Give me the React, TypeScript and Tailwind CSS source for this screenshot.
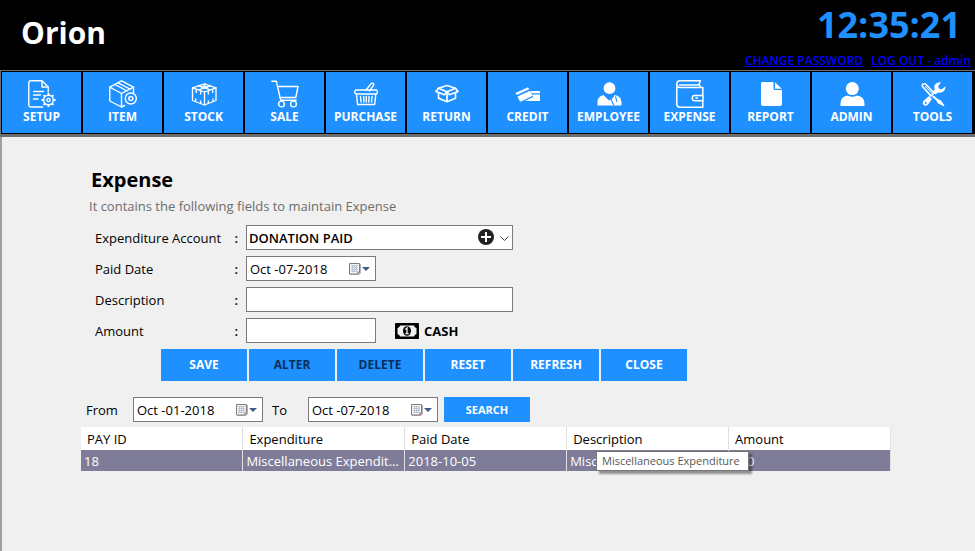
import type { ReactNode } from "react";

const line = {
  fill: "none",
  stroke: "currentColor",
  strokeWidth: 1.4,
  strokeLinejoin: "round" as const,
  strokeLinecap: "round" as const,
};

function Glyph({ children }: { children: ReactNode }) {
  return (
    <svg viewBox="0 0 28 28" className="size-7" aria-hidden="true">
      {children}
    </svg>
  );
}

const SetupIcon = (
  <Glyph>
    <g {...line}>
      <path d="M14.5 27H2.5A1.8 1.8 0 0 1 .8 25.300V2.500A1.800 1.800 0 0 1 2.500.8H14l6.200 6.200v5" />
      <path d="M14 1v6h6" />
      <path d="M5.500 11.500h10M5.500 15h7M5.500 19h4.500" />
      <circle cx="20.500" cy="20" r="4.800" />
      <circle cx="20.500" cy="20" r="1.600" />
    </g>
    <path
      d="M20.500 13v2M20.500 25v2M13.500 20h2M25.500 20h2M15.600 15.100l1.400 1.400M24 23.500l1.400 1.400M15.600 24.900l1.400-1.400M24 16.500l1.400-1.400"
      fill="none"
      stroke="currentColor"
      strokeWidth="2"
    />
  </Glyph>
);

const ItemIcon = (
  <Glyph>
    <g {...line}>
      <path d="M15.500 25.500L12.500 27 .8 21V7.200L12.500.8l12 6.400V13" />
      <path d="M.8 7.200l11.700 6.300 12-6.300M12.500 13.500V27" />
      <path d="M6 4.500l11.800 6.300M9 2.800l11.900 6.200" />
      <circle cx="21.800" cy="18.500" r="5.500" />
      <circle cx="21.800" cy="18.500" r="2" />
    </g>
  </Glyph>
);

const StockIcon = (
  <Glyph>
    <g {...line} strokeWidth={1.300}>
      <path d="M14.500 3.800l11.500 4v12.700L14.500 25 2.500 20.500V7.800z" />
      <path d="M2.500 7.800l12 4.200L26 7.800M14.500 12v13" />
      <path d="M8.500 5.800l12 4M20.500 5.800l-12 4M14.500 3.800v2l-3 1.500 3 1.200 3-1.200-3-1.500" />
      <path d="M6.200 9.500v3M10.700 11v3M18.300 11v3M22.700 9.500v3M5.700 19v2.500M10.700 20.800v2.700M18.300 20.800v2.700M23 19v2.500" />
    </g>
  </Glyph>
);

const SaleIcon = (
  <Glyph>
    <g {...line}>
      <path d="M.8 1.200h4.500l4.400 19h15.500" />
      <path d="M6.500 6.500H27l-2.200 11H9" />
      <circle cx="10.500" cy="24" r="2.900" />
      <circle cx="22.500" cy="24" r="2.900" />
    </g>
  </Glyph>
);

const PurchaseIcon = (
  <Glyph>
    <g {...line}>
      <rect x="2.800" y="10" width="22.500" height="4" rx="1.500" />
      <path d="M4.500 14l1 10.500h17.200L23.800 14" />
      <path d="M8.500 16.500l.5 5.500M11.700 16.500l.2 5.500M14.300 16.500V22M17 16.500l-.2 5.500M20 16.500l-.5 5.500" />
      <path d="M14 10l5.300-6.500q1.600-.7 2.300.3.500 1-.2 1.800L17.500 11" />
    </g>
  </Glyph>
);

const ReturnIcon = (
  <Glyph>
    <g {...line} strokeWidth={1.700}>
      <path d="M14 5.500l8.500 2.800-8.500 3.500-8.500-3.500z" />
      <path d="M5.500 8.300L3 11.500l8.500 3.200 2.500-2.900 2.500 2.900 8.500-3.200-2.500-3.200" />
      <path d="M5.500 13v5.200l8.500 3.500 8.500-3.500V13M14 12v9.500" />
    </g>
  </Glyph>
);

const CreditIcon = (
  <Glyph>
    <g fill="currentColor">
      <path d="M1.500 13L14 7.200l1.200 2L2.700 15zM3.500 16.500l12.500-5.800 2.700 5-11.500 5.800q-1 .4-1.500-.6z" />
      <path d="M16.500 11H25q1 0 1 1v1.200h-8.300zM18.500 14.500H26v5.800q0 .7-.7.7H11l8-4z" />
    </g>
  </Glyph>
);

const EmployeeIcon = (
  <Glyph>
    <g fill="currentColor">
      <circle cx="14.500" cy="8.200" r="5.900" />
      <path d="M2.500 25.500v-3.500q0-5.500 6-7l5.500 5.500 5.500-5.500q6.500 1 7 7v3.500z" />
    </g>
    <path
      d="M10 15l6 4.500 3 6M19 15.500l-3 4M20.500 16.500l1.500 5.500"
      fill="none"
      stroke="#1e90ff"
      strokeWidth="1.100"
    />
  </Glyph>
);

const ExpenseIcon = (
  <Glyph>
    <g {...line} strokeWidth={1.500}>
      <path d="M26.800 15V7.500H4Q.8 7.500.8 4V24q0 3.200 3.200 3.200h22.800V21" />
      <path d="M.8 4Q.8.800 4 .8h20.500L23 4l1.500 3M3.500 5h19" />
      <path d="M27 15.500h-8.200a2.600 2.600 0 0 0 0 5.200H27z" />
      <path d="M20 18.100h1.500" />
    </g>
  </Glyph>
);

const ReportIcon = (
  <Glyph>
    <g fill="currentColor">
      <path d="M5.500 2h11v6.500q0 1.500 1.500 1.500h7v14q0 2-2 2H6q-2 0-2-2V4q0-2 1.500-2z" />
      <path d="M18 2.200L24.800 8.700H18z" />
    </g>
  </Glyph>
);

const AdminIcon = (
  <Glyph>
    <g fill="currentColor">
      <circle cx="14.300" cy="8.600" r="6.500" />
      <path d="M2.500 26v-2.500q0-7 7-8 4.800 2.600 9.600 0 7.400 1 7.400 8V26z" />
    </g>
  </Glyph>
);

const ToolsIcon = (
  <Glyph>
    <path
      d="M3.500 6.500q-.8-2 1-2.600 1.500-.4 2.500.6l8 8.500-3 3z"
      fill="none"
      stroke="currentColor"
      strokeWidth="1.600"
    />
    <path d="M6 6l7.500 8M4.800 7.500l7 7.800" stroke="currentColor" strokeWidth="1" />
    <path d="M14.500 15.500l5 4 2 .5 4 5.500-1 .8-6-3.300-.8-2-4.500-4z" fill="currentColor" />
    <path
      d="M22 2.300q-3-.6-5.300 1.400-2.200 2.400-1 5.800l-2 2 3 3 2-2q3.800 1 6.200-1.500 1.800-2 1.600-4.800l-3.600 3.100q-3 .2-3.900-2.800z"
      fill="currentColor"
    />
    <path
      d="M10 16l3 3-4 5.500q-2.200 2-4.300.6-2-2.200 0-4.400zM6.800 22a1 1 0 1 0 .1 2 1 1 0 0 0-.1-2z"
      fill="currentColor"
      fillRule="evenodd"
    />
  </Glyph>
);

const modules: { label: string; icon: ReactNode }[] = [
  { label: "SETUP", icon: SetupIcon },
  { label: "ITEM", icon: ItemIcon },
  { label: "STOCK", icon: StockIcon },
  { label: "SALE", icon: SaleIcon },
  { label: "PURCHASE", icon: PurchaseIcon },
  { label: "RETURN", icon: ReturnIcon },
  { label: "CREDIT", icon: CreditIcon },
  { label: "EMPLOYEE", icon: EmployeeIcon },
  { label: "EXPENSE", icon: ExpenseIcon },
  { label: "REPORT", icon: ReportIcon },
  { label: "ADMIN", icon: AdminIcon },
  { label: "TOOLS", icon: ToolsIcon },
];

const actions = [
  { label: "SAVE" },
  { label: "ALTER", disabled: true },
  { label: "DELETE", disabled: true },
  { label: "RESET" },
  { label: "REFRESH" },
  { label: "CLOSE" },
];

const columns = ["PAY ID", "Expenditure", "Paid Date", "Description", "Amount"];
const rows = [["18", "Miscellaneous Expenditure", "2018-10-05", "Miscellaneous Expenditure", "500"]];

function DateBox({ id, value }: { id: string; value: string }) {
  return (
    <div className="flex h-[25px] w-[130px] items-center border border-[#7a7a7a] bg-white pr-1">
      <input
        id={id}
        type="text"
        defaultValue={value}
        className="h-full min-w-0 flex-1 bg-transparent pl-[3px] text-[13px] outline-none"
      />
      <button type="button" aria-label="Open calendar" className="flex shrink-0 items-center">
        <svg viewBox="0 0 23 14" className="h-3.5 w-[23px]">
          <path d="M2 2h11v9l-2 2H2z" fill="#b9b3b3" />
          <path d="M1.500 1.500h10v8l-2 2.500h-8z" fill="#f2f4f8" stroke="#85797b" />
          <path
            d="M3 3.500h7M3 5.500h7M3 7.500h7M3 9.500h5M4.500 3v7M6.500 3v7M8.500 3v7"
            stroke="#b4bccb"
            strokeWidth=".8"
          />
          <path d="M11.500 9.500h-2V12z" fill="#85797b" />
          <path d="M14 5h8l-4 4z" fill="#43598c" />
        </svg>
      </button>
    </div>
  );
}

function Field({ id, label, children }: { id: string; label: string; children: ReactNode }) {
  return (
    <div className="flex items-center">
      <label htmlFor={id} className="flex w-[151px] justify-between pr-2">
        <span>{label}</span>
        <span className="font-semibold">:</span>
      </label>
      {children}
    </div>
  );
}

export default function App() {
  return (
    <div className="flex min-h-screen flex-col bg-[#f0f0f0] font-['Open_Sans','Noto_Sans',sans-serif] text-[13px] leading-5 text-black">
      <header className="flex h-[70px] justify-between bg-black pl-[21px]">
        <h1 className="mt-3 text-[30px] leading-[42px] font-bold text-white">Orion</h1>
        <div className="flex flex-col items-end pr-1">
          <time className="pr-2.5 text-[36px] leading-[50px] font-bold text-[#1e90ff]">12:35:21</time>
          <div className="mt-px flex gap-2 text-[12px] font-semibold text-[#0000ff] underline">
            <a href="#password">CHANGE PASSWORD</a>
            <a href="#logout">LOG OUT - admin</a>
          </div>
        </div>
      </header>

      <nav className="grid grid-cols-12 gap-0.5 border-t border-b-3 border-l border-[#6e6e6e] bg-black pt-px pr-[3px] pb-px pl-px">
        {modules.map((m) => (
          <button
            key={m.label}
            type="button"
            className="flex h-[61px] flex-col items-center gap-px bg-[#1e90ff] pt-2 text-[12px] font-bold text-white"
          >
            {m.icon}
            <span className="leading-4">{m.label}</span>
          </button>
        ))}
      </nav>

      <main className="flex-1 border-l-2 border-[#a0a0a0] pt-[31px] pr-[84px] pl-[79px]">
        <h2 className="pl-2.5 text-[20px] leading-6 font-bold">Expense</h2>
        <p className="mt-1 pl-2 text-[#6d6d6d]">It contains the following fields to maintain Expense</p>

        <form className="mt-[9px]" onSubmit={(e) => e.preventDefault()}>
          <div className="flex flex-col gap-1.5 pl-3.5">
            <Field id="account" label="Expenditure Account">
              <div className="relative h-[25px] w-[267px]">
                <select
                  id="account"
                  className="h-full w-full appearance-none border border-[#7a7a7a] bg-white pl-0.5 text-[13px] font-semibold"
                >
                  <option>DONATION PAID</option>
                </select>
                <button type="button" aria-label="Add account" className="absolute top-1 right-[19px]">
                  <svg viewBox="0 0 16 16" className="size-4">
                    <circle cx="8" cy="8" r="8" fill="#222" />
                    <path d="M8 3v10M3 8h10" stroke="#fff" strokeWidth="2" />
                  </svg>
                </button>
                <svg viewBox="0 0 9 5" className="pointer-events-none absolute top-[11px] right-1 h-[5px] w-[9px]">
                  <path d="M.5.5l4 4 4-4" fill="none" stroke="#444" />
                </svg>
              </div>
            </Field>
            <Field id="paid" label="Paid Date">
              <DateBox id="paid" value="Oct -07-2018" />
            </Field>
            <Field id="description" label="Description">
              <input
                id="description"
                type="text"
                className="h-[25px] w-[267px] border border-[#7a7a7a] bg-white px-1 outline-none"
              />
            </Field>
            <Field id="amount" label="Amount">
              <input
                id="amount"
                type="text"
                className="h-[25px] w-[130px] border border-[#7a7a7a] bg-white px-1 outline-none"
              />
              <button type="button" className="ml-[19px] flex items-center gap-[5px] font-bold">
                <svg viewBox="0 0 24 16" className="h-4 w-6">
                  <rect width="24" height="16" rx="1" fill="#000" />
                  <path d="M5 2.500h14q.3 2 2.500 2.500v6q-2.200.5-2.500 2.500H5q-.3-2-2.500-2.500V5Q4.700 4.500 5 2.500z" fill="#f0f0f0" />
                  <ellipse cx="12" cy="8" rx="4" ry="4.800" fill="#000" />
                  <path d="M10.300 6.500l1.700-1.500v5.500M10.300 10.700h3.400" fill="none" stroke="#f0f0f0" strokeWidth="1.300" />
                </svg>
                <span>CASH</span>
              </button>
            </Field>
          </div>

          <div className="mt-1.5 flex gap-0.5 pl-20">
            {actions.map((a) => (
              <button
                key={a.label}
                type="button"
                disabled={a.disabled}
                className="h-8 w-[86px] bg-[#1e90ff] text-[12px] font-bold text-white disabled:text-[#0a2f5c]"
              >
                {a.label}
              </button>
            ))}
          </div>
        </form>

        <form className="mt-4 flex items-center pl-[5px]" onSubmit={(e) => e.preventDefault()}>
          <label htmlFor="from" className="w-[47px]">
            From
          </label>
          <DateBox id="from" value="Oct -01-2018" />
          <label htmlFor="to" className="w-[45px] pl-[9px]">
            To
          </label>
          <DateBox id="to" value="Oct -07-2018" />
          <button type="submit" className="ml-1.5 h-[25px] w-[86px] bg-[#1e90ff] text-[11px] font-bold text-white">
            SEARCH
          </button>
        </form>

        <div className="relative mt-[5px]">
          <table className="w-full table-fixed border-collapse text-left">
            <thead>
              <tr className="h-[23px] bg-white">
                {columns.map((c) => (
                  <th key={c} className="border-r border-[#e0e0e0] pl-1.5 font-normal">
                    {c}
                  </th>
                ))}
              </tr>
            </thead>
            <tbody>
              {rows.map((r) => (
                <tr key={r[0]} className="h-[21px] bg-[#7f7c99] text-white">
                  {r.map((cell, i) => (
                    <td key={i} className="truncate border-r border-[#e0e0e0] pl-[3px]">
                      {cell}
                    </td>
                  ))}
                </tr>
              ))}
            </tbody>
          </table>
          <div
            role="tooltip"
            className="absolute top-6 left-[515px] flex h-5 w-[153px] items-center border border-[#767676] bg-white pl-[5px] text-[11px] whitespace-nowrap text-[#575757] shadow-[3px_3px_2px_rgba(0,0,0,0.4)]"
          >
            Miscellaneous Expenditure
          </div>
        </div>
      </main>
    </div>
  );
}
